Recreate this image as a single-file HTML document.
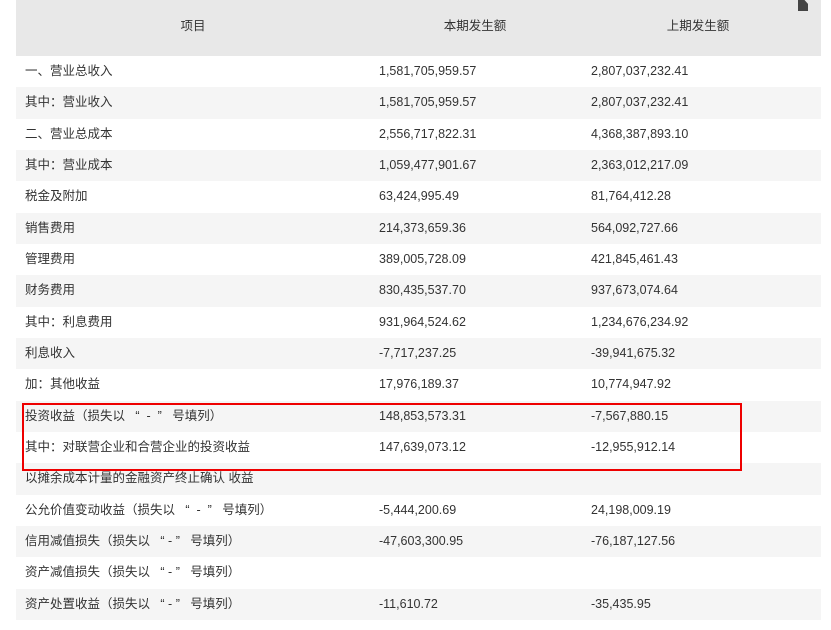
<!DOCTYPE html>
<html><head><meta charset="utf-8"><style>
body{margin:0;background:#fff;font-family:"Liberation Sans","Noto Sans CJK SC",sans-serif;font-size:12.5px;color:#333;width:831px;height:630px;overflow:hidden;position:relative}
.t{position:absolute;left:16px;top:0;width:805px}
.h{height:56px;background:#e8e8e8;position:relative}
.h span{position:absolute;top:15px;transform:translateX(-50%)}
.r{height:31.33px;line-height:31.33px;position:relative}
.r:nth-child(even){background:#f5f5f5}
.r span{position:absolute;top:0;white-space:pre}
.a{left:9px}.b{left:363px}.c{left:575px}
.box{position:absolute;left:22px;top:403px;width:716px;height:64px;border:2px solid #e00}
.ic{position:absolute;left:798px;top:0;width:10px;height:11px;background:#444;clip-path:polygon(0 0,65% 0,100% 35%,100% 100%,0 100%)}
</style></head><body>
<div class="t">
<div class="h"><span style="left:177px">项目</span><span style="left:459px">本期发生额</span><span style="left:682px">上期发生额</span></div>
<div>
<div class="r"><span class="a">一、营业总收入</span><span class="b">1,581,705,959.57</span><span class="c">2,807,037,232.41</span></div>
<div class="r"><span class="a">其中：营业收入</span><span class="b">1,581,705,959.57</span><span class="c">2,807,037,232.41</span></div>
<div class="r"><span class="a">二、营业总成本</span><span class="b">2,556,717,822.31</span><span class="c">4,368,387,893.10</span></div>
<div class="r"><span class="a">其中：营业成本</span><span class="b">1,059,477,901.67</span><span class="c">2,363,012,217.09</span></div>
<div class="r"><span class="a">税金及附加</span><span class="b">63,424,995.49</span><span class="c">81,764,412.28</span></div>
<div class="r"><span class="a">销售费用</span><span class="b">214,373,659.36</span><span class="c">564,092,727.66</span></div>
<div class="r"><span class="a">管理费用</span><span class="b">389,005,728.09</span><span class="c">421,845,461.43</span></div>
<div class="r"><span class="a">财务费用</span><span class="b">830,435,537.70</span><span class="c">937,673,074.64</span></div>
<div class="r"><span class="a">其中：利息费用</span><span class="b">931,964,524.62</span><span class="c">1,234,676,234.92</span></div>
<div class="r"><span class="a">利息收入</span><span class="b">-7,717,237.25</span><span class="c">-39,941,675.32</span></div>
<div class="r"><span class="a">加：其他收益</span><span class="b">17,976,189.37</span><span class="c">10,774,947.92</span></div>
<div class="r"><span class="a">投资收益（损失以   “  -  ”   号填列）</span><span class="b">148,853,573.31</span><span class="c">-7,567,880.15</span></div>
<div class="r"><span class="a">其中：对联营企业和合营企业的投资收益</span><span class="b">147,639,073.12</span><span class="c">-12,955,912.14</span></div>
<div class="r"><span class="a">以摊余成本计量的金融资产终止确认 收益</span></div>
<div class="r"><span class="a">公允价值变动收益（损失以   “  -  ”   号填列）</span><span class="b">-5,444,200.69</span><span class="c">24,198,009.19</span></div>
<div class="r"><span class="a">信用减值损失（损失以   “ - ”   号填列）</span><span class="b">-47,603,300.95</span><span class="c">-76,187,127.56</span></div>
<div class="r"><span class="a">资产减值损失（损失以   “ - ”   号填列）</span></div>
<div class="r"><span class="a">资产处置收益（损失以   “ - ”   号填列）</span><span class="b">-11,610.72</span><span class="c">-35,435.95</span></div>
</div></div>
<div class="box"></div>
<div class="ic"></div>
</body></html>
